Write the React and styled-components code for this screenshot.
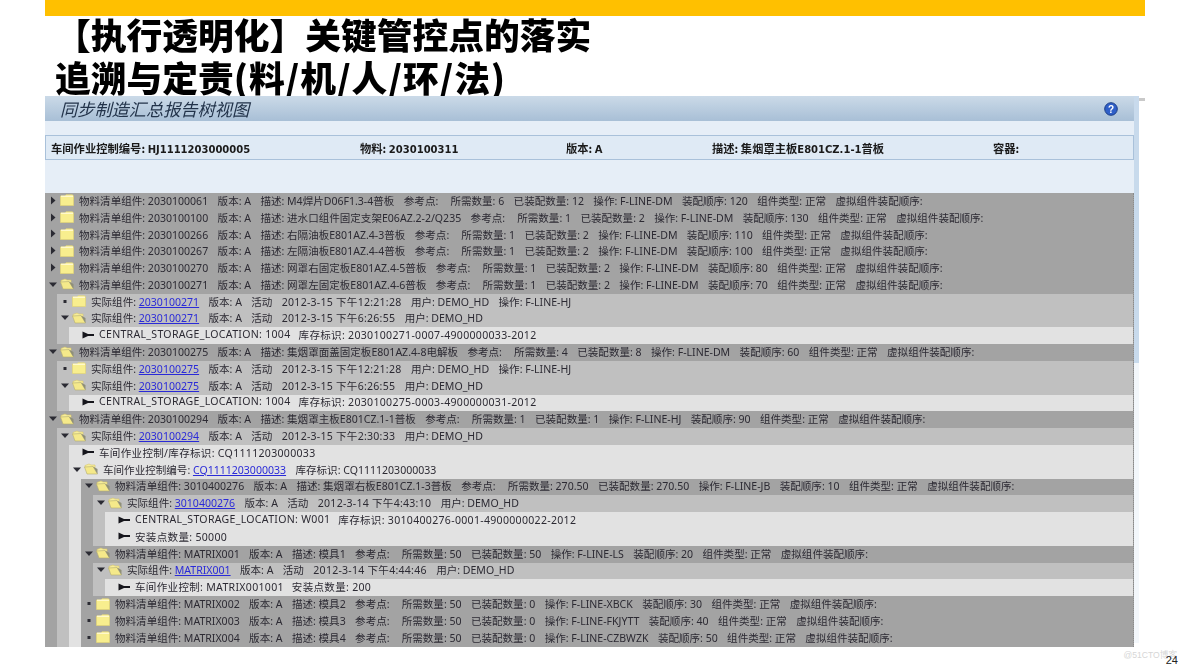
import React from "react";
import styled, { createGlobalStyle } from "styled-components";

const GlobalStyle = createGlobalStyle`
  html, body {
    margin: 0;
    padding: 0;
    background: #ffffff;
  }
`;

// 树的数据
const bom = (id, desc, need, done, op, seq, children, state) => ({
  kind: "node",
  tone: "dark",
  state: state || (children ? "open" : "closed"),
  children,
  fields: [
    `物料清单组件: ${id}`,
    "版本: A",
    `描述: ${desc}`,
    "参考点: ",
    `所需数量: ${need}`,
    `已装配数量: ${done}`,
    `操作: ${op}`,
    `装配顺序: ${seq}`,
    "组件类型: 正常",
    "虚拟组件装配顺序:",
  ],
});

const actual = (id, time, children, op) => ({
  kind: "node",
  tone: "mid",
  state: children ? "open" : "leaf",
  children,
  link: { label: "实际组件: ", text: id },
  fields: [
    "版本: A",
    "活动",
    time,
    "用户: DEMO_HD",
    ...(op ? [`操作: ${op}`] : []),
  ],
});

const item = (...fields) => ({ kind: "item", fields });

const storage = (loc, tag) =>
  item(`CENTRAL_STORAGE_LOCATION: ${loc}`, `库存标识: ${tag}`);

const TREE = [
  bom("2030100061", "M4焊片D06F1.3-4普板", 6, 12, "F-LINE-DM", 120),
  bom("2030100100", "进水口组件固定支架E06AZ.2-2/Q235", 1, 2, "F-LINE-DM", 130),
  bom("2030100266", "右隔油板E801AZ.4-3普板", 1, 2, "F-LINE-DM", 110),
  bom("2030100267", "左隔油板E801AZ.4-4普板", 1, 2, "F-LINE-DM", 100),
  bom("2030100270", "网罩右固定板E801AZ.4-5普板", 1, 2, "F-LINE-DM", 80),
  bom("2030100271", "网罩左固定板E801AZ.4-6普板", 1, 2, "F-LINE-DM", 70, [
    actual("2030100271", "2012-3-15 下午12:21:28", null, "F-LINE-HJ"),
    actual("2030100271", "2012-3-15 下午6:26:55", [
      storage("1004", "2030100271-0007-4900000033-2012"),
    ]),
  ]),
  bom("2030100275", "集烟罩面盖固定板E801AZ.4-8电解板", 4, 8, "F-LINE-DM", 60, [
    actual("2030100275", "2012-3-15 下午12:21:28", null, "F-LINE-HJ"),
    actual("2030100275", "2012-3-15 下午6:26:55", [
      storage("1004", "2030100275-0003-4900000031-2012"),
    ]),
  ]),
  bom("2030100294", "集烟罩主板E801CZ.1-1普板", 1, 1, "F-LINE-HJ", 90, [
    actual("2030100294", "2012-3-15 下午2:30:33", [
      item("车间作业控制/库存标识: CQ1111203000033"),
      {
        kind: "node",
        tone: "light",
        state: "open",
        link: { label: "车间作业控制编号: ", text: "CQ1111203000033" },
        fields: ["库存标识: CQ1111203000033"],
        children: [
          bom("3010400276", "集烟罩右板E801CZ.1-3普板", "270.50", "270.50", "F-LINE-JB", 10, [
            actual("3010400276", "2012-3-14 下午4:43:10", [
              storage("W001", "3010400276-0001-4900000022-2012"),
              item("安装点数量: 50000"),
            ]),
          ]),
          bom("MATRIX001", "模具1", 50, 50, "F-LINE-LS", 20, [
            actual("MATRIX001", "2012-3-14 下午4:44:46", [
              item("车间作业控制: MATRIX001001", "安装点数量: 200"),
            ]),
          ]),
          bom("MATRIX002", "模具2", 50, 0, "F-LINE-XBCK", 30, null, "leaf"),
          bom("MATRIX003", "模具3", 50, 0, "F-LINE-FKJYTT", 40, null, "leaf"),
          bom("MATRIX004", "模具4", 50, 0, "F-LINE-CZBWZK", 50, null, "leaf"),
        ],
      },
    ]),
  ]),
];

const TONES = { dark: "#a3a3a3", mid: "#c0c0c0", light: "#e2e2e2" };
const CHILD_TONE = { dark: "mid", mid: "light", light: "light" };

const Toggle = ({ state }) => (
  <ToggleBox>
    <svg width="8" height="9" viewBox="0 0 8 9">
      {state === "closed" && <path d="M2 0.5 L6.5 4.5 L2 8.5 Z" fill="#2b2b33" />}
      {state === "open" && <path d="M0 2.5 L8 2.5 L4 7 Z" fill="#2b2b33" />}
      {state === "leaf" && <rect x="2.5" y="3" width="3" height="3" fill="#2b2b33" />}
    </svg>
  </ToggleBox>
);

const Folder = ({ open }) =>
  open ? (
    <svg width="14" height="12" viewBox="0 0 14 12">
      <path d="M1 2.5 L5 1 L7 2 L11 2 L11 5 L1 5 Z" fill="#f7ee9c" stroke="#d8c868" strokeWidth="0.6" />
      <path d="M0.5 4 L9 3.5 L13.5 11 L3 11 Z" fill="#f5e98a" stroke="#b4ac70" strokeWidth="0.6" />
      <path d="M9 3.5 L13.5 6 L13.5 11 Z" fill="#8f8f78" />
    </svg>
  ) : (
    <svg width="14" height="12" viewBox="0 0 14 12">
      <path d="M0.5 2 L5 2 L6 0.8 L12.5 0.8 L13.5 2 L13.5 11.5 L0.5 11.5 Z" fill="#f8ee8e" stroke="#e3d576" strokeWidth="0.7" />
      <rect x="1" y="1.6" width="12" height="1.4" fill="#fff9cc" />
    </svg>
  );

const ItemArrow = () => (
  <svg width="12" height="8" viewBox="0 0 12 8">
    <path d="M0.5 0.5 L6 3 L12 3 L12 5 L6 5 L0.5 7.5 Z" fill="#16161c" />
  </svg>
);

// 日期字段在原图里略宽一点
const Fields = ({ fields }) =>
  fields.map((text, i) => (
    <Field key={i} $wide={/^\d{4}-\d+-\d+ /.test(text)}>
      {text}
    </Field>
  ));

const TreeNode = ({ node }) => {
  if (node.kind === "item") {
    return (
      <ItemRow>
        <ItemArrow />
        <ItemText>
          <Fields fields={node.fields} />
        </ItemText>
      </ItemRow>
    );
  }
  return (
    <Block $tone={node.tone}>
      <Row>
        <Toggle state={node.state} />
        <Folder open={node.state === "open"} />
        <RowText>
          {node.link && (
            <Field>
              {node.link.label}
              <TreeLink href="#">{node.link.text}</TreeLink>
            </Field>
          )}
          <Fields fields={node.fields} />
        </RowText>
      </Row>
      {node.children && (
        <Children>
          <Block $tone={CHILD_TONE[node.tone]}>
            {node.children.map((child, i) => (
              <TreeNode key={i} node={child} />
            ))}
          </Block>
        </Children>
      )}
    </Block>
  );
};

const App = () => {
  return (
    <Slide>
      <GlobalStyle />
      <TopBar />
      <Title>
        【执行透明化】关键管控点的落实
        <br />
        追溯与定责<TitleLatin>(料/机/人/环/法)</TitleLatin>
      </Title>
      <Panel>
        <Main>
          <PanelHeader>
            <PanelTitle>同步制造汇总报告树视图</PanelTitle>
            <svg width="14" height="14" viewBox="0 0 14 14">
              <circle cx="7" cy="7" r="6.3" fill="#2f5fc8" stroke="#1d3f86" strokeWidth="1" />
              <text x="7" y="10.6" textAnchor="middle" fontSize="10" fontWeight="700" fontFamily="Liberation Sans, sans-serif" fill="#ffffff">
                ?
              </text>
            </svg>
          </PanelHeader>
          <InfoBar>
            <InfoCell><InfoLabel>车间作业控制编号: </InfoLabel><InfoValue>HJ1111203000005</InfoValue></InfoCell>
            <InfoCell><InfoLabel>物料: </InfoLabel><InfoValue>2030100311</InfoValue></InfoCell>
            <InfoCell><InfoLabel>版本: </InfoLabel><InfoValue>A</InfoValue></InfoCell>
            <InfoCell><InfoLabel>描述: 集烟罩主板</InfoLabel><InfoValue>E801CZ.1-1</InfoValue><InfoLabel>普板</InfoLabel></InfoCell>
            <InfoCell><InfoLabel>容器:</InfoLabel></InfoCell>
          </InfoBar>
          <Tree>
            {TREE.map((node, i) => (
              <TreeNode key={i} node={node} />
            ))}
          </Tree>
        </Main>
        <Scrollbar>
          <Track>
            <Thumb />
          </Track>
          <ScrollTick />
        </Scrollbar>
      </Panel>
      <Watermark>@51CTO博客</Watermark>
      <PageNumber>24</PageNumber>
    </Slide>
  );
};

export default App;

const Slide = styled.div`
  position: relative;
  width: 1184px;
  height: 666px;
  padding-left: 45px;
  box-sizing: border-box;
  overflow: hidden;
  background: #ffffff;
`;

const TopBar = styled.div`
  width: 1100px;
  height: 16px;
  background: #ffc000;
`;

const Title = styled.h1`
  height: 80px;
  margin: 0 0 0 10px;
  font-family: "Noto Sans CJK SC", sans-serif;
  font-size: 35.75px;
  font-weight: 900;
  line-height: 42.5px;
  color: #000000;
  white-space: nowrap;
  position: relative;
  top: -3px;
  filter: blur(0.3px);
`;

const TitleLatin = styled.span`
  letter-spacing: 0.9px;
`;

const Panel = styled.div`
  display: flex;
  width: 1100px;
  height: 551px;
  position: relative;
`;

const Main = styled.div`
  width: 1089px;
  background: #e6eef7;
  display: flex;
  flex-direction: column;
  filter: blur(0.3px);
`;

const PanelHeader = styled.div`
  height: 25px;
  flex: none;
  display: flex;
  align-items: center;
  justify-content: space-between;
  padding: 0 16px 0 15px;
  background: linear-gradient(#cbdae8, #a8bfd6);
`;

const PanelTitle = styled.div`
  font-family: "Noto Sans CJK SC", sans-serif;
  font-size: 17.2px;
  font-style: italic;
  color: #22334a;
  line-height: 25px;
`;

const InfoBar = styled.div`
  margin-top: 14px;
  height: 25px;
  flex: none;
  box-sizing: border-box;
  display: grid;
  grid-template-columns: 309px 206px 146px 281px 1fr;
  align-items: center;
  padding-left: 5px;
  background: #dfeaf5;
  border: 1px solid #a9c1da;
`;

const InfoCell = styled.div`
  white-space: pre;
`;

const InfoLabel = styled.span`
  font-family: "Noto Sans CJK SC", sans-serif;
  font-size: 11.3px;
  font-weight: 700;
  color: #1a1a1a;
`;

const InfoValue = styled.span`
  font-family: "DejaVu Sans", sans-serif;
  font-size: 10px;
  font-weight: 700;
  color: #1a1a1a;
`;

const Tree = styled.div`
  margin-top: 33px;
  flex: 1;
  min-height: 0;
  overflow: hidden;
  border-right: 1px dotted #8a8a8a;
  background: #a3a3a3;
  font-family: "Noto Sans", "Noto Sans CJK SC", sans-serif;
  font-size: 10.55px;
  color: #2c2a33;
`;

const Block = styled.div`
  background: ${(p) => TONES[p.$tone]};
`;

const Row = styled.div`
  height: 16.8px;
  box-sizing: border-box;
  padding: 0 0 2px 4px;
  display: flex;
  align-items: center;
  white-space: nowrap;
`;

const ToggleBox = styled.span`
  width: 8px;
  height: 9px;
  margin-right: 3px;
  flex: none;
  display: flex;
`;

const RowText = styled.span`
  display: flex;
  gap: 9.4px;
  margin-left: 5px;
`;

const ItemText = styled(RowText)`
  gap: 8px;
`;

const Field = styled.span`
  white-space: pre;
  letter-spacing: ${(p) => (p.$wide ? "0.25px" : "inherit")};
`;

const TreeLink = styled.a`
  color: #2a2ad8;
  text-decoration: underline;
`;

const ItemRow = styled.div`
  height: 16.8px;
  box-sizing: border-box;
  padding: 0 0 2px 13px;
  display: flex;
  align-items: center;
  white-space: nowrap;
  letter-spacing: 0.3px;
  background: ${TONES.light};
`;

const Children = styled.div`
  padding-left: 12px;
`;

const Scrollbar = styled.div`
  position: relative;
  width: 11px;
`;

const Track = styled.div`
  width: 5px;
  height: 547px;
  background: #f3f7fb;
`;

const Thumb = styled.div`
  height: 267px;
  background: #c8daec;
`;

const ScrollTick = styled.div`
  position: absolute;
  left: 5px;
  top: 2px;
  width: 6px;
  height: 3px;
  background: #c9c9c9;
`;

const Watermark = styled.div`
  position: absolute;
  right: 7px;
  bottom: 4px;
  font-family: "Liberation Sans", "Noto Sans CJK SC", sans-serif;
  font-size: 8.6px;
  line-height: 14px;
  color: #d6d6d6;
`;

const PageNumber = styled.div`
  position: absolute;
  right: 6px;
  bottom: 0;
  font-family: "Liberation Sans", sans-serif;
  font-size: 11px;
  line-height: 12px;
  color: #222222;
`;
